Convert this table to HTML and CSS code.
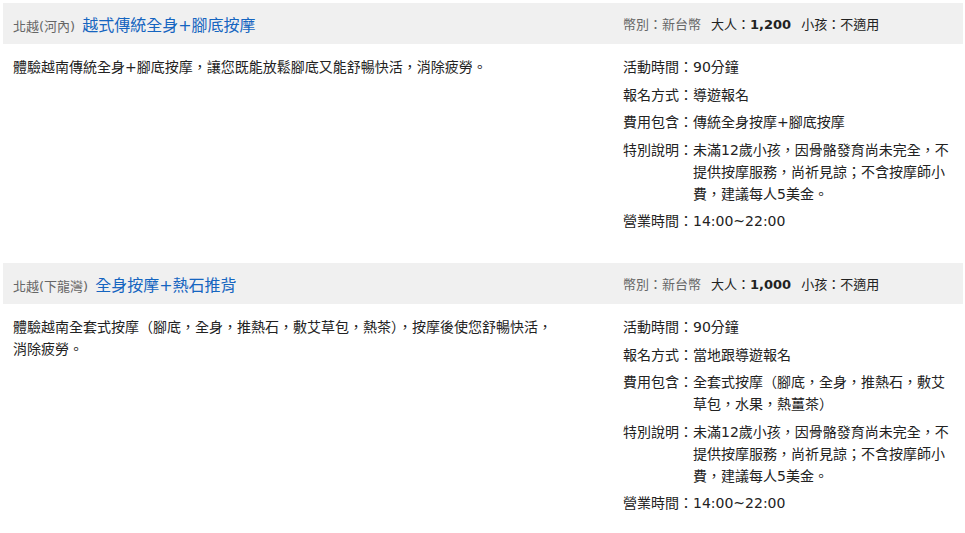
FILE: index.html
```html
<!DOCTYPE html>
<html lang="zh-Hant">
<head>
<meta charset="utf-8">
<title>按摩行程</title>
<link rel="stylesheet" href="styles.css">
</head>
<body>
<div class="list">
  <section class="tour">
    <div class="tour-head">
      <div class="head-left"><span class="region">北越(河內)</span><span class="title">越式傳統全身+腳底按摩</span></div>
      <div class="head-right"><span class="cur">幣別：新台幣</span><span class="price">大人：<b>1,200</b></span><span class="price">小孩：不適用</span></div>
    </div>
    <div class="tour-body">
      <p class="desc">體驗越南傳統全身+腳底按摩，讓您既能放鬆腳底又能舒暢快活，消除疲勞。</p>
      <ul class="info">
        <li><span class="label">活動時間：</span><span class="val">90分鐘</span></li>
        <li><span class="label">報名方式：</span><span class="val">導遊報名</span></li>
        <li><span class="label">費用包含：</span><span class="val">傳統全身按摩+腳底按摩</span></li>
        <li><span class="label">特別說明：</span><span class="val">未滿12歲小孩，因骨骼發育尚未完全，不提供按摩服務，尚祈見諒；不含按摩師小費，建議每人5美金。</span></li>
        <li><span class="label">營業時間：</span><span class="val">14:00~22:00</span></li>
      </ul>
    </div>
  </section>
  <section class="tour">
    <div class="tour-head">
      <div class="head-left"><span class="region">北越(下龍灣)</span><span class="title">全身按摩+熱石推背</span></div>
      <div class="head-right"><span class="cur">幣別：新台幣</span><span class="price">大人：<b>1,000</b></span><span class="price">小孩：不適用</span></div>
    </div>
    <div class="tour-body">
      <p class="desc">體驗越南全套式按摩（腳底，全身，推熱石，敷艾草包，熱茶），按摩後使您舒暢快活，消除疲勞。</p>
      <ul class="info">
        <li><span class="label">活動時間：</span><span class="val">90分鐘</span></li>
        <li><span class="label">報名方式：</span><span class="val">當地跟導遊報名</span></li>
        <li><span class="label">費用包含：</span><span class="val">全套式按摩（腳底，全身，推熱石，敷艾草包，水果，熱薑茶）</span></li>
        <li><span class="label">特別說明：</span><span class="val">未滿12歲小孩，因骨骼發育尚未完全，不提供按摩服務，尚祈見諒；不含按摩師小費，建議每人5美金。</span></li>
        <li><span class="label">營業時間：</span><span class="val">14:00~22:00</span></li>
      </ul>
    </div>
  </section>
</div>
</body>
</html>
```

FILE: styles.css
```css
* { box-sizing: border-box; }
html, body { margin: 0; padding: 0; background: #fff; }
body {
  font-family: "DejaVu Sans", "Noto Sans CJK TC", sans-serif;
  color: #222;
  font-size: 14px;
}
.list {
  width: 960px;
  margin: 3px 0 0 3px;
}
.tour { margin-bottom: 19px; }
.tour-head,
.tour-body {
  display: grid;
  grid-template-columns: 552px 330px;
  column-gap: 58px;
  padding: 0 10px;
}
.tour-head {
  background: #f0f0f0;
  height: 41px;
  align-items: center;
}
.region {
  font-size: 13px;
  color: #666;
  margin-right: 7px;
}
.title {
  font-size: 16px;
  color: #1565c0;
}
.head-right {
  font-size: 13px;
  color: #222;
  display: flex;
  gap: 10px;
}
.cur { color: #666; }
.price b { font-weight: bold; }
.tour-body {
  padding-top: 12px;
  padding-bottom: 12px;
}
.desc {
  margin: 0;
  line-height: 22px;
  color: #222;
}
.info {
  list-style: none;
  margin: 0;
  padding: 0;
  display: flex;
  flex-direction: column;
  gap: 5.5px;
}
.info li {
  display: flex;
  line-height: 22px;
}
.label {
  flex: none;
  width: 70px;
}
.val { flex: 1; }
```
